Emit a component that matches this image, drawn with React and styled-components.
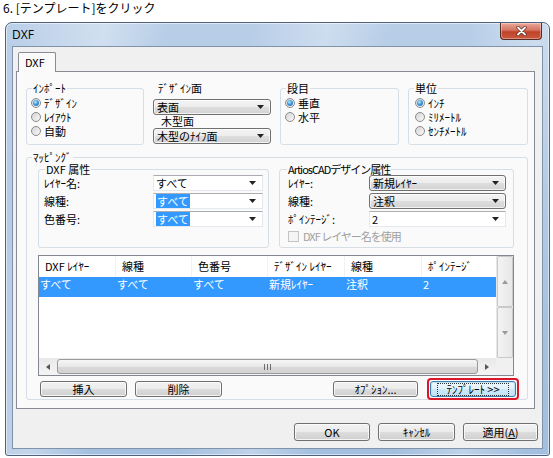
import React from 'react'
import styled, { createGlobalStyle, css } from 'styled-components'

const GlobalStyle = createGlobalStyle`
  html, body { margin: 0; padding: 0; background: #fff; }
  body {
    font-family: "Noto Sans CJK JP", "Noto Sans", sans-serif;
    font-size: 11px;
    color: #000;
  }
  * { box-sizing: border-box; }
`

const Caption = styled.div`
  height: 22px;
  padding: 1px 0 0 3px;
  line-height: 14px;
  font-size: 12px;
`

const Window = styled.div`
  margin-left: 5px;
  width: 545px;
  height: 434px;
  border: 1px solid #4f6279;
  border-radius: 7px 7px 3px 3px;
  padding: 0 6px 6px;
  display: flex;
  flex-direction: column;
  background:
    linear-gradient(100deg, rgba(255,255,255,0) 0%, rgba(255,255,255,.35) 16%, rgba(255,255,255,0) 26%,
      rgba(255,255,255,0) 40%, rgba(255,255,255,.3) 52%, rgba(255,255,255,0) 62%,
      rgba(255,255,255,0) 75%, rgba(255,255,255,.3) 86%, rgba(255,255,255,0) 96%),
    linear-gradient(180deg, #b9cfe8 0%, #a9c4e2 40%, #a3bfdf 100%);
  box-shadow: inset 0 0 0 1px rgba(255,255,255,.55);
`

const TitleBar = styled.div`
  height: 23px;
  display: flex;
  align-items: flex-start;
  justify-content: space-between;
`

const Title = styled.div`
  padding-top: 5px;
  line-height: 14px;
  font-family: "Open Sans", "Liberation Sans", sans-serif;
  font-size: 12px;
`

const CloseButton = styled.div`
  width: 42px;
  height: 17px;
  margin-right: 1px;
  border: 1px solid #5b2b22;
  border-top: none;
  border-radius: 0 0 4px 4px;
  display: flex;
  align-items: center;
  justify-content: center;
  background: linear-gradient(180deg, #e9a99b 0%, #d4735f 45%, #c0432a 55%, #c9583d 100%);
  box-shadow: inset 0 0 0 1px rgba(255,255,255,.35);
`

const Client = styled.div`
  flex: 1;
  border: 1px solid #8193a8;
  background: #f0f0f0;
  display: flex;
  flex-direction: column;
  padding-top: 5px;
`

const TabStrip = styled.div`
  display: flex;
  padding-left: 5px;
  position: relative;
  z-index: 1;
`

const Tab = styled.div`
  width: 38px;
  height: 20px;
  margin-bottom: -1px;
  border: 1px solid #898c95;
  border-bottom: none;
  border-radius: 2px 2px 0 0;
  background: #fafafa;
  padding: 2px 0 0 6px;
  line-height: 14px;
`

const TabPanel = styled.div`
  margin-left: 3px;
  width: 519px;
  height: 338px;
  border: 1px solid #898c95;
  background: #fafafa;
  padding: 9px 0 0 9px;
`

const TopRow = styled.div`
  display: flex;
  align-items: flex-start;
  gap: 9px;
`

const GroupBox = styled.fieldset`
  margin: 0;
  min-width: 0;
  width: ${p => p.$w}px;
  height: ${p => p.$h}px;
  padding: 0 ${p => p.$pr || 4}px 0 ${p => p.$pl || 4}px;
  border: 1px solid #d5dfe5;
  border-radius: 3px;
  display: flex;
  flex-direction: column;
`

const Legend = styled.legend`
  padding: 0 1px;
  margin-left: ${p => p.$ml || 1}px;
  line-height: ${p => p.$lh || 14}px;
  font-size: 11px;
  letter-spacing: ${p => p.$ls || 0}px;
`

const RadioRow = styled.div`
  display: flex;
  align-items: center;
  gap: 3px;
  height: 14px;
  line-height: 14px;
  margin-top: ${p => p.$first ? 1 : 0}px;
`

const Radio = styled.span`
  position: relative;
  flex: none;
  width: 10px;
  height: 10px;
  border-radius: 50%;
  border: 1px solid #8b8b8b;
  background: linear-gradient(135deg, #d6d6d6, #f8f8f8);
  ${p => p.$on && css`
    &::after {
      content: "";
      position: absolute;
      left: 1px;
      top: 1px;
      width: 6px;
      height: 6px;
      border-radius: 50%;
      background: radial-gradient(circle at 40% 35%, #b8ecff 0, #3e9be0 45%, #1b5d9e 100%);
    }
  `}
`

const Column = styled.div`
  width: 118px;
  display: flex;
  flex-direction: column;
`

const FieldLabel = styled.div`
  padding-left: ${p => p.$pl || 5}px;
  line-height: ${p => p.$lh || 14}px;
  height: ${p => p.$lh || 14}px;
`

const selectBase = css`
  width: ${p => p.$w}px;
  height: 16px;
  display: flex;
  align-items: center;
  justify-content: space-between;
  padding: 0 6px 0 3px;
  line-height: 14px;
  flex: none;
`

const AeroSelect = styled.div`
  ${selectBase}
  margin-top: ${p => p.$mt || 0}px;
  border: 1px solid #707070;
  border-radius: 3px;
  background: linear-gradient(180deg, #f4f4f4 0%, #ececec 50%, #dedede 51%, #d2d2d2 100%);
  box-shadow: inset 0 0 0 1px rgba(255,255,255,.7);
`

const EditSelect = styled.div`
  ${selectBase}
  padding-left: 2px;
  border: 1px solid #e3e9ef;
  border-top-color: #abadb3;
  background: #fff;
`

const Picked = styled.span`
  background: #3399ff;
  color: #fff;
  padding: 0 1px;
`

const DropArrow = () => (
  <svg width="7" height="4" viewBox="0 0 7 4"><path d="M0 0h7L3.5 4z" fill="#222" /></svg>
)

const Mapping = styled(GroupBox)`
  margin: 6px 0 0 0;
  padding: 0 13px 2px 11px;
`

const SubRow = styled.div`
  display: flex;
  gap: 10px;
`

const FormRow = styled.div`
  display: flex;
  align-items: center;
  height: 16px;
  margin-top: ${p => p.$mt ?? 2}px;
`

const RowLabel = styled.div`
  width: ${p => p.$w}px;
  line-height: 14px;
  flex: none;
`

const CheckRow = styled.div`
  display: flex;
  align-items: center;
  gap: 4px;
  height: 14px;
  margin-top: 2px;
  color: #a0a0a0;
  letter-spacing: -1px;
`

const Check = styled.span`
  width: 11px;
  height: 11px;
  border: 1px solid #c4c4c4;
  background: #f4f4f4;
  flex: none;
`

const ListView = styled.div`
  margin-top: 7px;
  height: 121px;
  border: 1px solid #828790;
  background: #fff;
  display: grid;
  grid-template-columns: 1fr 17px;
  grid-template-rows: 1fr 17px;
`

const ListBody = styled.div`
  overflow: hidden;
`

const HeaderRow = styled.div`
  display: flex;
  height: 21px;
`

const HeaderCell = styled.div`
  width: ${p => p.$w}px;
  flex: none;
  padding: 3px 0 0 6px;
  line-height: 14px;
  border-right: 1px solid #f2f2f2;
`

const DataRow = styled.div`
  display: flex;
  height: 20px;
  background: #3399ff;
  color: #fff;
`

const DataCell = styled.div`
  width: ${p => p.$w}px;
  flex: none;
  padding: 0 0 0 1px;
  line-height: 14px;
`

const VScroll = styled.div`
  display: flex;
  flex-direction: column;
  background: #f0f0f0;
  border-left: 1px solid #e6e6e6;
`

const ScrollButton = styled.div`
  flex: 1;
  display: flex;
  align-items: center;
  justify-content: center;
  border: 1px solid #c9c9c9;
  border-radius: 2px;
  background: linear-gradient(90deg, #f3f3f3, #e8e8e8);
`

const HScroll = styled.div`
  display: flex;
  align-items: center;
  background: linear-gradient(180deg, #e9e9e9, #f4f4f4);
  padding: 0 2px;
`

const ArrowCell = styled.div`
  width: 14px;
  display: flex;
  justify-content: center;
`

const Thumb = styled.div`
  flex: 1;
  height: 15px;
  margin: 0 2px;
  border: 1px solid #9a9a9a;
  border-radius: 3px;
  background: linear-gradient(180deg, #f6f6f6 0%, #e8e8e8 50%, #d9d9d9 51%, #d2d2d2 100%);
  display: flex;
  align-items: center;
  justify-content: center;
`

const Corner = styled.div`
  background: #f0f0f0;
`

const ButtonRow = styled.div`
  display: flex;
  align-items: center;
  margin-top: 5px;
  padding-left: 2px;
`

const PushButton = styled.div`
  width: ${p => p.$w}px;
  height: ${p => p.$h || 16}px;
  margin-left: ${p => p.$ml || 0}px;
  flex: none;
  display: flex;
  align-items: center;
  justify-content: center;
  line-height: 14px;
  border: 1px solid #707070;
  border-radius: 3px;
  background: linear-gradient(180deg, #f2f2f2 0%, #ebebeb 50%, #dddddd 51%, #cfcfcf 100%);
  box-shadow: inset 0 0 0 1px rgba(252,252,252,.8);
  ${p => p.$focus && css`
    border-color: #3c7fb1;
    background: linear-gradient(180deg, #eef7fd 0%, #e2f1fb 50%, #cde9fa 51%, #c0e2f7 100%);
    box-shadow: inset 0 0 0 1px #bde3f7;
  `}
`

const FocusRect = styled.span`
  border: 1px dotted #333;
  padding: 0 8px;
  line-height: 11px;
`

const Highlight = styled.div`
  margin: -3px -5px -3px 9px;
  padding: 1px;
  border: 2px solid #d8182a;
  border-radius: 4px;
`

const Spacer = styled.div`
  flex: 1;
`

const DialogButtons = styled.div`
  display: flex;
  justify-content: flex-end;
  gap: 8px;
  margin-top: 14px;
  padding-right: 4px;
`

const Tri = ({ dir, color = '#7a7a7a' }) => {
  const d = {
    up: 'M0 4L3 0l3 4z',
    down: 'M0 0h6L3 4z',
    left: 'M4 0v6L0 3z',
    right: 'M0 0v6l4-3z',
  }[dir]
  const vertical = dir === 'up' || dir === 'down'
  return (
    <svg width={vertical ? 6 : 4} height={vertical ? 4 : 6} viewBox={vertical ? '0 0 6 4' : '0 0 4 6'}>
      <path d={d} fill={color} />
    </svg>
  )
}

const Grip = () => (
  <svg width="7" height="6" viewBox="0 0 7 6">
    <path d="M0.5 0v6M3.5 0v6M6.5 0v6" stroke="#6d6d6d" strokeWidth="1" />
  </svg>
)

const columns = [
  { head: 'DXF ﾚｲﾔｰ', cell: 'すべて', w: 77 },
  { head: '線種', cell: 'すべて', w: 76 },
  { head: '色番号', cell: 'すべて', w: 76 },
  { head: 'ﾃﾞｻﾞｲﾝ ﾚｲﾔｰ', cell: '新規ﾚｲﾔｰ', w: 77 },
  { head: '線種', cell: '注釈', w: 77 },
  { head: 'ﾎﾟｲﾝﾃｰｼﾞ', cell: '2', w: 80 },
]

const App = () => {
  return (
    <>
      <GlobalStyle />
      <Caption>6. [テンプレート]をクリック</Caption>
      <Window>
        <TitleBar>
          <Title>DXF</Title>
          <CloseButton>
            <svg width="11" height="10" viewBox="0 0 11 10">
              <path d="M2 1.5l7 7M9 1.5l-7 7" stroke="#5a2a20" strokeWidth="3.2" strokeLinecap="round" />
              <path d="M2 1.5l7 7M9 1.5l-7 7" stroke="#fff" strokeWidth="1.8" strokeLinecap="round" />
            </svg>
          </CloseButton>
        </TitleBar>
        <Client>
          <TabStrip>
            <Tab>DXF</Tab>
          </TabStrip>
          <TabPanel>
            <TopRow>
              <GroupBox $w={118} $h={64}>
                <Legend>ｲﾝﾎﾟｰﾄ</Legend>
                <RadioRow $first><Radio $on />ﾃﾞｻﾞｲﾝ</RadioRow>
                <RadioRow><Radio />ﾚｲｱｳﾄ</RadioRow>
                <RadioRow><Radio />自動</RadioRow>
              </GroupBox>
              <Column>
                <FieldLabel>ﾃﾞｻﾞｲﾝ面</FieldLabel>
                <AeroSelect $w={118} $mt={4}>表面<DropArrow /></AeroSelect>
                <FieldLabel $pl={8} $lh={13}>木型面</FieldLabel>
                <AeroSelect $w={118}>木型のﾅｲﾌ面<DropArrow /></AeroSelect>
              </Column>
              <GroupBox $w={119} $h={64}>
                <Legend>段目</Legend>
                <RadioRow $first><Radio $on />垂直</RadioRow>
                <RadioRow><Radio />水平</RadioRow>
              </GroupBox>
              <GroupBox $w={120} $h={64} $pl={6}>
                <Legend $ml={-1}>単位</Legend>
                <RadioRow $first><Radio $on />ｲﾝﾁ</RadioRow>
                <RadioRow><Radio />ﾐﾘﾒｰﾄﾙ</RadioRow>
                <RadioRow><Radio />ｾﾝﾁﾒｰﾄﾙ</RadioRow>
              </GroupBox>
            </TopRow>

            <Mapping $w={502} $h={249}>
              <Legend $lh={12} $ml={-6}>ﾏｯﾋﾟﾝｸﾞ</Legend>
              <SubRow>
                <GroupBox $w={231} $h={85} $pl={5}>
                  <Legend $lh={12} $ml={0}>DXF 属性</Legend>
                  <FormRow $mt={0}>
                    <RowLabel $w={109}>ﾚｲﾔｰ名:</RowLabel>
                    <EditSelect $w={110}>すべて<DropArrow /></EditSelect>
                  </FormRow>
                  <FormRow>
                    <RowLabel $w={109}>線種:</RowLabel>
                    <EditSelect $w={110}><Picked>すべて</Picked><DropArrow /></EditSelect>
                  </FormRow>
                  <FormRow>
                    <RowLabel $w={109}>色番号:</RowLabel>
                    <EditSelect $w={110}><Picked>すべて</Picked><DropArrow /></EditSelect>
                  </FormRow>
                </GroupBox>
                <GroupBox $w={235} $h={85} $pl={8}>
                  <Legend $lh={12} $ml={-1} $ls={-1}>ArtiosCADデザイン属性</Legend>
                  <FormRow $mt={0}>
                    <RowLabel $w={81}>ﾚｲﾔｰ:</RowLabel>
                    <AeroSelect $w={137}>新規ﾚｲﾔｰ<DropArrow /></AeroSelect>
                  </FormRow>
                  <FormRow>
                    <RowLabel $w={81}>線種:</RowLabel>
                    <AeroSelect $w={137}>注釈<DropArrow /></AeroSelect>
                  </FormRow>
                  <FormRow>
                    <RowLabel $w={81}>ﾎﾟｲﾝﾃｰｼﾞ:</RowLabel>
                    <EditSelect $w={137}>2<DropArrow /></EditSelect>
                  </FormRow>
                  <CheckRow><Check />DXF レイヤー名を使用</CheckRow>
                </GroupBox>
              </SubRow>

              <ListView>
                <ListBody>
                  <HeaderRow>
                    {columns.map((c, i) => (
                      <HeaderCell key={i} $w={c.w}>{c.head}</HeaderCell>
                    ))}
                  </HeaderRow>
                  <DataRow>
                    {columns.map((c, i) => (
                      <DataCell key={i} $w={c.w}>{c.cell}</DataCell>
                    ))}
                  </DataRow>
                </ListBody>
                <VScroll>
                  <ScrollButton><Tri dir="up" color="#9a9a9a" /></ScrollButton>
                  <ScrollButton><Tri dir="down" color="#9a9a9a" /></ScrollButton>
                </VScroll>
                <HScroll>
                  <ArrowCell><Tri dir="left" color="#555" /></ArrowCell>
                  <Thumb><Grip /></Thumb>
                  <ArrowCell><Tri dir="right" color="#555" /></ArrowCell>
                </HScroll>
                <Corner />
              </ListView>

              <ButtonRow>
                <PushButton $w={87}>挿入</PushButton>
                <PushButton $w={87} $ml={8}>削除</PushButton>
                <Spacer />
                <PushButton $w={85}>ｵﾌﾟｼｮﾝ...</PushButton>
                <Highlight>
                  <PushButton $w={86} $focus><FocusRect>ﾃﾝﾌﾟﾚｰﾄ &gt;&gt;</FocusRect></PushButton>
                </Highlight>
              </ButtonRow>
            </Mapping>
          </TabPanel>
          <DialogButtons>
            <PushButton $w={76} $h={18}>OK</PushButton>
            <PushButton $w={77} $h={18}>ｷｬﾝｾﾙ</PushButton>
            <PushButton $w={75} $h={18}>適用(<u>A</u>)</PushButton>
          </DialogButtons>
        </Client>
      </Window>
    </>
  )
}

export default App
